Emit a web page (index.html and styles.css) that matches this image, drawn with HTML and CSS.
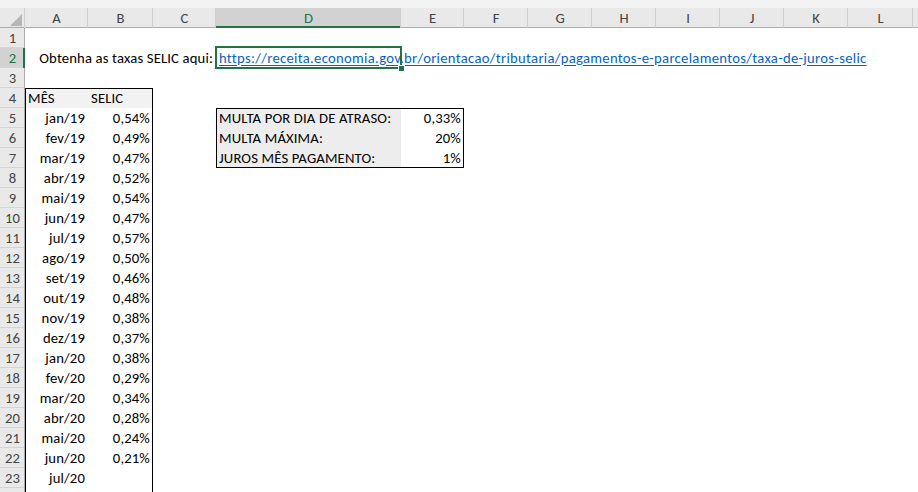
FILE: index.html
```html
<!DOCTYPE html>
<html lang="pt-BR">
<head>
    <meta charset="UTF-8">
    <title>Taxas SELIC</title>
    <link rel="stylesheet" href="styles.css">
</head>
<body>
    <div class="topbar"></div>
    <table class="sheet">
        <colgroup>
            <col class="w-rh"><col class="w-a"><col class="w-b"><col class="w-c"><col class="w-d"><col class="w-e">
            <col class="w-n"><col class="w-n"><col class="w-n"><col class="w-n"><col class="w-n"><col class="w-n"><col class="w-l"><col class="w-n">
        </colgroup>
        <thead>
            <tr>
                <th class="corner"><svg width="12" height="12" viewBox="0 0 12 12"><polygon points="12,0 12,12 0,12" fill="#b6b6b6"/></svg></th>
                <th>A</th><th>B</th><th>C</th><th class="sel">D</th><th>E</th><th>F</th><th>G</th><th>H</th><th>I</th><th>J</th><th>K</th><th>L</th><th></th>
            </tr>
        </thead>
        <tbody>
            <tr><th>1</th></tr>
            <tr>
                <th class="sel">2</th>
                <td colspan="3" class="num">Obtenha as taxas SELIC aqui:</td>
                <td class="active"><a href="#">https://receita.economia.gov.br/orientacao/tributaria/pagamentos-e-parcelamentos/taxa-de-juros-selic</a></td>
            </tr>
            <tr><th>3</th></tr>
            <tr><th>4</th><td class="head box-tl">MÊS</td><td class="head box-tr">SELIC</td></tr>
            <tr><th>5</th><td class="num box-l">jan/19</td><td class="num box-r">0,54%</td><td></td><td class="label box-tl">MULTA POR DIA DE ATRASO:</td><td class="num box-tr">0,33%</td></tr>
            <tr><th>6</th><td class="num box-l">fev/19</td><td class="num box-r">0,49%</td><td></td><td class="label box-l">MULTA MÁXIMA:</td><td class="num box-r">20%</td></tr>
            <tr><th>7</th><td class="num box-l">mar/19</td><td class="num box-r">0,47%</td><td></td><td class="label box-bl">JUROS MÊS PAGAMENTO:</td><td class="num box-br">1%</td></tr>
            <tr><th>8</th><td class="num box-l">abr/19</td><td class="num box-r">0,52%</td></tr>
            <tr><th>9</th><td class="num box-l">mai/19</td><td class="num box-r">0,54%</td></tr>
            <tr><th>10</th><td class="num box-l">jun/19</td><td class="num box-r">0,47%</td></tr>
            <tr><th>11</th><td class="num box-l">jul/19</td><td class="num box-r">0,57%</td></tr>
            <tr><th>12</th><td class="num box-l">ago/19</td><td class="num box-r">0,50%</td></tr>
            <tr><th>13</th><td class="num box-l">set/19</td><td class="num box-r">0,46%</td></tr>
            <tr><th>14</th><td class="num box-l">out/19</td><td class="num box-r">0,48%</td></tr>
            <tr><th>15</th><td class="num box-l">nov/19</td><td class="num box-r">0,38%</td></tr>
            <tr><th>16</th><td class="num box-l">dez/19</td><td class="num box-r">0,37%</td></tr>
            <tr><th>17</th><td class="num box-l">jan/20</td><td class="num box-r">0,38%</td></tr>
            <tr><th>18</th><td class="num box-l">fev/20</td><td class="num box-r">0,29%</td></tr>
            <tr><th>19</th><td class="num box-l">mar/20</td><td class="num box-r">0,34%</td></tr>
            <tr><th>20</th><td class="num box-l">abr/20</td><td class="num box-r">0,28%</td></tr>
            <tr><th>21</th><td class="num box-l">mai/20</td><td class="num box-r">0,24%</td></tr>
            <tr><th>22</th><td class="num box-l">jun/20</td><td class="num box-r">0,21%</td></tr>
            <tr><th>23</th><td class="num box-l">jul/20</td><td class="num box-r"></td></tr>
            <tr><th></th><td class="num box-l"></td><td class="num box-r"></td></tr>
        </tbody>
    </table>
</body>
</html>
```

FILE: styles.css
```css
html, body {
    margin: 0;
    padding: 0;
    background: #fff;
    overflow: hidden;
}
body {
    font-family: Carlito, Calibri, Lato, "Liberation Sans", sans-serif;
    font-size: 14.67px;
    letter-spacing: 0.15px;
    color: #000;
}
.topbar {
    height: 8px;
    background: #f3f3f3;
}
.sheet {
    table-layout: fixed;
    border-collapse: separate;
    border-spacing: 0;
    width: 977px;
}
.w-rh { width: 25px; }
.w-a { width: 63px; }
.w-b { width: 65px; }
.w-c { width: 63px; }
.w-d { width: 185px; }
.w-e { width: 63px; }
.w-n { width: 64px; }
.w-l { width: 65px; }

th, td {
    padding: 0;
    height: 20px;
    box-sizing: border-box;
    white-space: nowrap;
    font-weight: normal;
}

/* headers */
thead th {
    height: 20px;
    background: #e9e9e9;
    color: #444;
    text-align: center;
    vertical-align: middle;
    letter-spacing: 0;
    box-shadow: inset -1px 0 #cfcfcf, inset 0 -1px #ababab;
}
thead th.corner {
    text-align: right;
    vertical-align: bottom;
    padding: 0 3px 2px 0;
    line-height: 0;
}
thead th.sel {
    background: #d2d2d2;
    color: #217346;
    box-shadow: inset -1px 0 #cfcfcf, inset 0 -2px #217346;
}
tbody th {
    background: #e9e9e9;
    color: #444;
    text-align: center;
    letter-spacing: 0;
    box-shadow: inset -1px 0 #ababab, inset 0 -1px #d4d4d4;
}
tbody th.sel {
    background: #d2d2d2;
    color: #217346;
    box-shadow: inset -2px 0 #217346, inset 0 -1px #d4d4d4;
}

/* cells */
td {
    padding: 0 3px 1px;
    overflow: visible;
}
td.num { text-align: right; }
td.head { background: #f2f2f2; }
td.label { background: #ededed; }

td.active {
    position: relative;
    padding-left: 3px;
}
td.active::after {
    content: "";
    position: absolute;
    left: -1px;
    top: -2px;
    right: -1px;
    bottom: -1px;
    border: 2px solid #217346;
    pointer-events: none;
}
td.active::before {
    content: "";
    position: absolute;
    right: -4px;
    bottom: -4px;
    width: 5px;
    height: 5px;
    background: #217346;
    border: 1px solid #fff;
    z-index: 1;
}
td.active a {
    color: #0563c1;
    letter-spacing: 0.3px;
    text-decoration: underline;
    text-underline-offset: 2px;
}

/* borders of the two small tables */
.box-l { box-shadow: inset 1px 0 #000; }
.box-r { box-shadow: inset -1px 0 #000; }
.box-tl { box-shadow: inset 1px 0 #000, inset 0 1px #000; }
.box-tr { box-shadow: inset -1px 0 #000, inset 0 1px #000; }
.box-bl { box-shadow: inset 1px 0 #000, inset 0 -1px #000; }
.box-br { box-shadow: inset -1px 0 #000, inset 0 -1px #000; }
```
